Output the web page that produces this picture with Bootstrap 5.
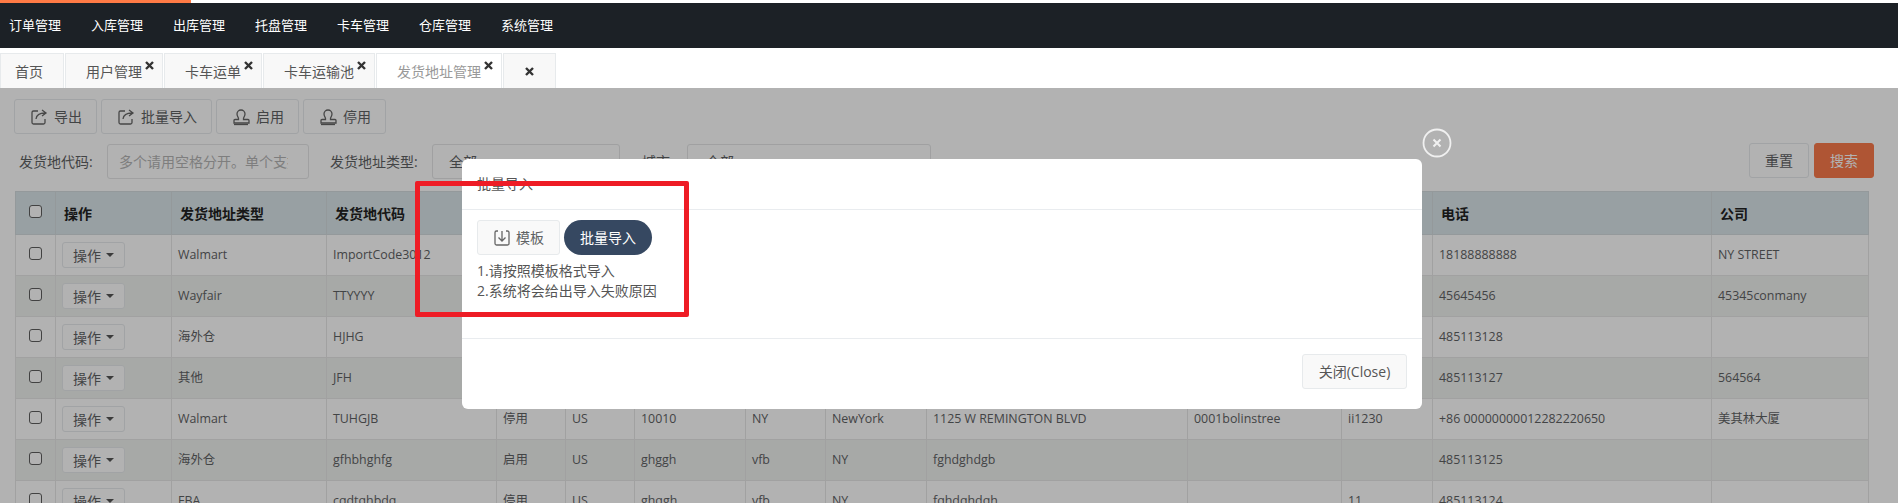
<!DOCTYPE html>
<html lang="zh">
<head>
<meta charset="utf-8">
<title>发货地址管理</title>
<link href="https://cdn.jsdelivr.net/npm/bootstrap@5.3.0/dist/css/bootstrap.min.css" rel="stylesheet">
<style>
html,body{height:503px;overflow:hidden;}
body{position:relative;font-family:"Open Sans","Noto Sans CJK SC",sans-serif;font-size:14px;color:#5f6264;background:#fff;}
.load-line{height:3px;background:#fff;}
.load-fill{height:3px;width:191px;background:#ff7a45;}
.top-menu{height:45px;background:#1c2126;padding-left:9px;gap:30px;}
.top-menu a{color:#fff;font-size:13px;text-decoration:none;}
.tab-row{height:40px;padding-top:5px;gap:1px;background:#fff;}
.tab-item{height:35px;display:flex;align-items:center;position:relative;background:#f8f8f8;border:1px solid #e7eaec;border-bottom:0;color:#555;padding-left:20px;padding-right:20px;white-space:nowrap;}
.tab-item.home{width:64px;padding-left:14px;padding-right:0;}
.tab-item.current{background:#fff;color:#999;}
.tab-x{position:absolute;right:8px;top:7px;width:9px;height:9px;}
.tab-item.only-x{width:53px;justify-content:center;padding:0;}
.tab-item.only-x .tab-x{position:static;}
.content-area{padding:11px 0 0 14px;width:1884px;}
.tool-btn{height:35px;width:83px;border:1px solid #e7eaec;border-radius:3px;background:#fff;color:#5f6264;font-size:14px;padding:0 0 0 15px;display:flex;align-items:center;gap:6px;white-space:nowrap;}
.tool-btn.wide{width:111px;}
.filter-row{margin-top:10px;height:35px;position:relative;}
.filter-label{margin-left:5px;width:88px;color:#5f6264;white-space:nowrap;}
.filter-input{height:35px;width:202px;border:1px solid #e5e6e7;border-radius:3px;padding:0 20px 0 11px;font-size:14px;color:#5f6264;background:#fff;overflow:hidden;white-space:nowrap;}
.filter-input::placeholder{color:#b5b5b5;}
.lab2{margin-left:21px;width:102px;}
.sel2{width:188px;padding-left:16px;line-height:33px;}
.lab3{margin-left:22px;width:45px;}
.sel3{width:244px;padding-left:18px;line-height:33px;}
.act-btn{width:60px;height:35px;border-radius:3px;font-size:14px;border:1px solid #e7eaec;background:#fff;color:#5f6264;}
.act-btn.go{background:#fb7a4b;border-color:#fb7a4b;color:#fff;margin-left:5px;}
.act-group{margin-left:auto;margin-right:10px;margin-top:-2px;}
.data-table{margin-top:12px;table-layout:fixed;width:1854px;margin-left:1px;border-collapse:collapse;font-size:12.4px;}
.data-table th,.data-table td{border:1px solid #e7e7e7;padding:0 6px;vertical-align:middle;white-space:nowrap;overflow:hidden;color:#5f6264;}
.data-table th{height:43px;background:#dae6ea;color:#222;font-size:14px;font-weight:700;padding:0 8px;border-color:#d5dcdf;}
.data-table td{height:41px;}
.data-table tbody tr:nth-child(even) td{background:#f0f2f0;}
.chk{width:13px;height:13px;border:1px solid #5f5f5f;border-radius:3px;background:#fff;display:block;margin:-4px auto 0;}
.op-btn{height:26px;width:63px;border:1px solid #e7eaec;border-radius:3px;background:#fff;color:#5f6264;font-size:14px;padding:0;display:flex;align-items:center;justify-content:center;gap:5px;}
.caret-mark{width:0;height:0;border-top:4px solid #555;border-left:4px solid transparent;border-right:4px solid transparent;}
.dim-layer{position:absolute;left:0;right:0;top:88px;bottom:0;background:rgba(0,0,0,.3);}
.import-dialog{position:absolute;left:462px;top:71px;width:960px;height:250px;background:#fff;border-radius:6px;border:0;}
.import-head{height:51px;padding:17px 15px 0;border-bottom:1px solid #e9ecef;color:#555;line-height:16px;}
.import-body{height:129px;padding:10px 15px 0;border-bottom:1px solid #e9ecef;color:#555;}
.import-foot{padding:15px;justify-content:flex-end;}
.tpl-btn{width:83px;height:35px;border:1px solid #e7eaec;border-radius:3px;background:#f9f9f9;color:#5f6264;font-size:14px;padding:0;display:flex;align-items:center;justify-content:center;gap:5px;}
.up-btn{width:88px;height:35px;border:0;border-radius:18px;background:#364861;color:#fff;font-size:14px;padding:0;margin-left:4px;}
.hint-text{margin-top:6px;line-height:20px;font-size:14px;}
.close-btn{width:105px;height:35px;border:1px solid #e7eaec;border-radius:3px;background:#f9f9f9;color:#555;font-size:14px;padding:0;}
.round-x{position:absolute;left:1422px;top:40px;width:30px;height:30px;}
.red-frame{position:absolute;left:415px;top:181px;width:274px;height:136px;border:5px solid #ee1c25;border-radius:2px;}
</style>
</head>
<body>
<div class="load-line"><div class="load-fill"></div></div>
<nav class="top-menu d-flex align-items-center">
<a href="#">订单管理</a><a href="#">入库管理</a><a href="#">出库管理</a><a href="#">托盘管理</a><a href="#">卡车管理</a><a href="#">仓库管理</a><a href="#">系统管理</a>
</nav>
<div class="tab-row d-flex">
<div class="tab-item home">首页</div>
<div class="tab-item">用户管理<svg class="tab-x" viewBox="0 0 9 9"><path d="M1 1l7 7M8 1L1 8" stroke="#333" stroke-width="2.4"/></svg></div>
<div class="tab-item">卡车运单<svg class="tab-x" viewBox="0 0 9 9"><path d="M1 1l7 7M8 1L1 8" stroke="#333" stroke-width="2.4"/></svg></div>
<div class="tab-item">卡车运输池<svg class="tab-x" viewBox="0 0 9 9"><path d="M1 1l7 7M8 1L1 8" stroke="#333" stroke-width="2.4"/></svg></div>
<div class="tab-item current">发货地址管理<svg class="tab-x" viewBox="0 0 9 9"><path d="M1 1l7 7M8 1L1 8" stroke="#333" stroke-width="2.4"/></svg></div>
<div class="tab-item only-x"><svg class="tab-x" viewBox="0 0 9 9"><path d="M1 1l7 7M8 1L1 8" stroke="#333" stroke-width="2.4"/></svg></div>
</div>
<main class="content-area">
<div class="d-flex gap-1">
<button class="tool-btn"><svg width="18" height="18" viewBox="0 0 18 18" fill="none" stroke="#666" stroke-width="1.3"><path d="M8 3H3.500a1.500 1.500 0 0 0-1.500 1.500v10A1.500 1.500 0 0 0 3.500 16h10a1.500 1.500 0 0 0 1.500-1.500V11"/><path d="M6 11c.5-4 3-6 9-6M12 2l4 3-4 3"/></svg>导出</button>
<button class="tool-btn wide"><svg width="18" height="18" viewBox="0 0 18 18" fill="none" stroke="#666" stroke-width="1.3"><path d="M8 3H3.500a1.500 1.500 0 0 0-1.500 1.500v10A1.500 1.500 0 0 0 3.500 16h10a1.500 1.500 0 0 0 1.500-1.500V11"/><path d="M6 11c.5-4 3-6 9-6M12 2l4 3-4 3"/></svg>批量导入</button>
<button class="tool-btn"><svg width="18" height="18" viewBox="0 0 18 18" fill="none" stroke="#666" stroke-width="1.3"><path d="M6.500 10.500c0-1-1.500-2.500-1.500-4.500a4 4 0 0 1 8 0c0 2-1.500 3.500-1.500 4.500v1h4.500a1 1 0 0 1 1 1V15H2v-2.500a1 1 0 0 1 1-1h3.500z"/><path d="M2 16.500h14"/></svg>启用</button>
<button class="tool-btn"><svg width="18" height="18" viewBox="0 0 18 18" fill="none" stroke="#666" stroke-width="1.3"><path d="M6.500 10.500c0-1-1.500-2.500-1.500-4.500a4 4 0 0 1 8 0c0 2-1.500 3.500-1.500 4.500v1h4.500a1 1 0 0 1 1 1V15H2v-2.500a1 1 0 0 1 1-1h3.500z"/><path d="M2 16.500h14"/></svg>停用</button>
</div>
<div class="filter-row d-flex align-items-center">
<span class="filter-label">发货地代码:</span>
<input class="filter-input" placeholder="多个请用空格分开。单个支持模糊查询">
<span class="filter-label lab2">发货地址类型:</span>
<div class="filter-input sel2">全部</div>
<span class="filter-label lab3">城市:</span>
<div class="filter-input sel3">全部</div>
<div class="act-group d-flex"><button class="act-btn">重置</button><button class="act-btn go">搜索</button></div>
</div>
<table class="data-table">
<colgroup><col style="width:40px"><col style="width:116px"><col style="width:155px"><col style="width:170px"><col style="width:69px"><col style="width:69px"><col style="width:111px"><col style="width:80px"><col style="width:101px"><col style="width:261px"><col style="width:154px"><col style="width:91px"><col style="width:279px"><col style="width:157px"></colgroup>
<thead><tr><th><span class="chk"></span></th><th>操作</th><th>发货地址类型</th><th>发货地代码</th><th>状态</th><th>国家</th><th>邮编</th><th>州</th><th>城市</th><th>地址</th><th>地址2</th><th>联系人</th><th>电话</th><th>公司</th></tr></thead>
<tbody>
<tr><td><span class="chk"></span></td><td><button class="op-btn">操作<i class="caret-mark"></i></button></td><td>Walmart</td><td>ImportCode3012</td><td></td><td></td><td></td><td></td><td></td><td></td><td></td><td></td><td>18188888888</td><td>NY STREET</td></tr>
<tr><td><span class="chk"></span></td><td><button class="op-btn">操作<i class="caret-mark"></i></button></td><td>Wayfair</td><td>TTYYYY</td><td></td><td></td><td></td><td></td><td></td><td></td><td></td><td></td><td>45645456</td><td>45345conmany</td></tr>
<tr><td><span class="chk"></span></td><td><button class="op-btn">操作<i class="caret-mark"></i></button></td><td>海外仓</td><td>HJHG</td><td></td><td></td><td></td><td></td><td></td><td></td><td></td><td></td><td>485113128</td><td></td></tr>
<tr><td><span class="chk"></span></td><td><button class="op-btn">操作<i class="caret-mark"></i></button></td><td>其他</td><td>JFH</td><td></td><td></td><td></td><td></td><td></td><td></td><td></td><td></td><td>485113127</td><td>564564</td></tr>
<tr><td><span class="chk"></span></td><td><button class="op-btn">操作<i class="caret-mark"></i></button></td><td>Walmart</td><td>TUHGJB</td><td>停用</td><td>US</td><td>10010</td><td>NY</td><td>NewYork</td><td>1125 W REMINGTON BLVD</td><td>0001bolinstree</td><td>ii1230</td><td>+86 00000000012282220650</td><td>美其林大厦</td></tr>
<tr><td><span class="chk"></span></td><td><button class="op-btn">操作<i class="caret-mark"></i></button></td><td>海外仓</td><td>gfhbhghfg</td><td>启用</td><td>US</td><td>ghggh</td><td>vfb</td><td>NY</td><td>fghdghdgb</td><td></td><td></td><td>485113125</td><td></td></tr>
<tr><td><span class="chk"></span></td><td><button class="op-btn">操作<i class="caret-mark"></i></button></td><td>FBA</td><td>cqdtqhbdq</td><td>停用</td><td>US</td><td>ghqgh</td><td>vfb</td><td>NY</td><td>fqhdqhdqh</td><td></td><td>11</td><td>485113124</td><td></td></tr>
</tbody>
</table>
</main>
<div class="dim-layer">
<div class="import-dialog">
<div class="import-head">批量导入</div>
<div class="import-body">
<div class="d-flex"><button class="tpl-btn"><svg width="18" height="18" viewBox="0 0 18 18" fill="none" stroke="#666" stroke-width="1.3"><path d="M5 2H3.500A1.500 1.500 0 0 0 2 3.500v11A1.500 1.500 0 0 0 3.500 16h11a1.500 1.500 0 0 0 1.500-1.500v-11A1.500 1.500 0 0 0 14.500 2H13"/><path d="M9 2v10M5.500 8.500L9 12l3.500-3.500"/></svg>模板</button><button class="up-btn">批量导入</button></div>
<div class="hint-text">1.请按照模板格式导入<br>2.系统将会给出导入失败原因</div>
</div>
<div class="import-foot d-flex"><button class="close-btn">关闭(Close)</button></div>
</div>
<svg class="round-x" viewBox="0 0 30 30" fill="none" stroke="#f0f0f0"><circle cx="15" cy="15" r="13.500" stroke-width="1.800"/><path d="M11.500 11.500l7 7M18.500 11.500l-7 7" stroke-width="2"/></svg>
</div>
<div class="red-frame"></div>
<script src="https://cdn.jsdelivr.net/npm/bootstrap@5.3.0/dist/js/bootstrap.bundle.min.js"></script>
</body>
</html>
